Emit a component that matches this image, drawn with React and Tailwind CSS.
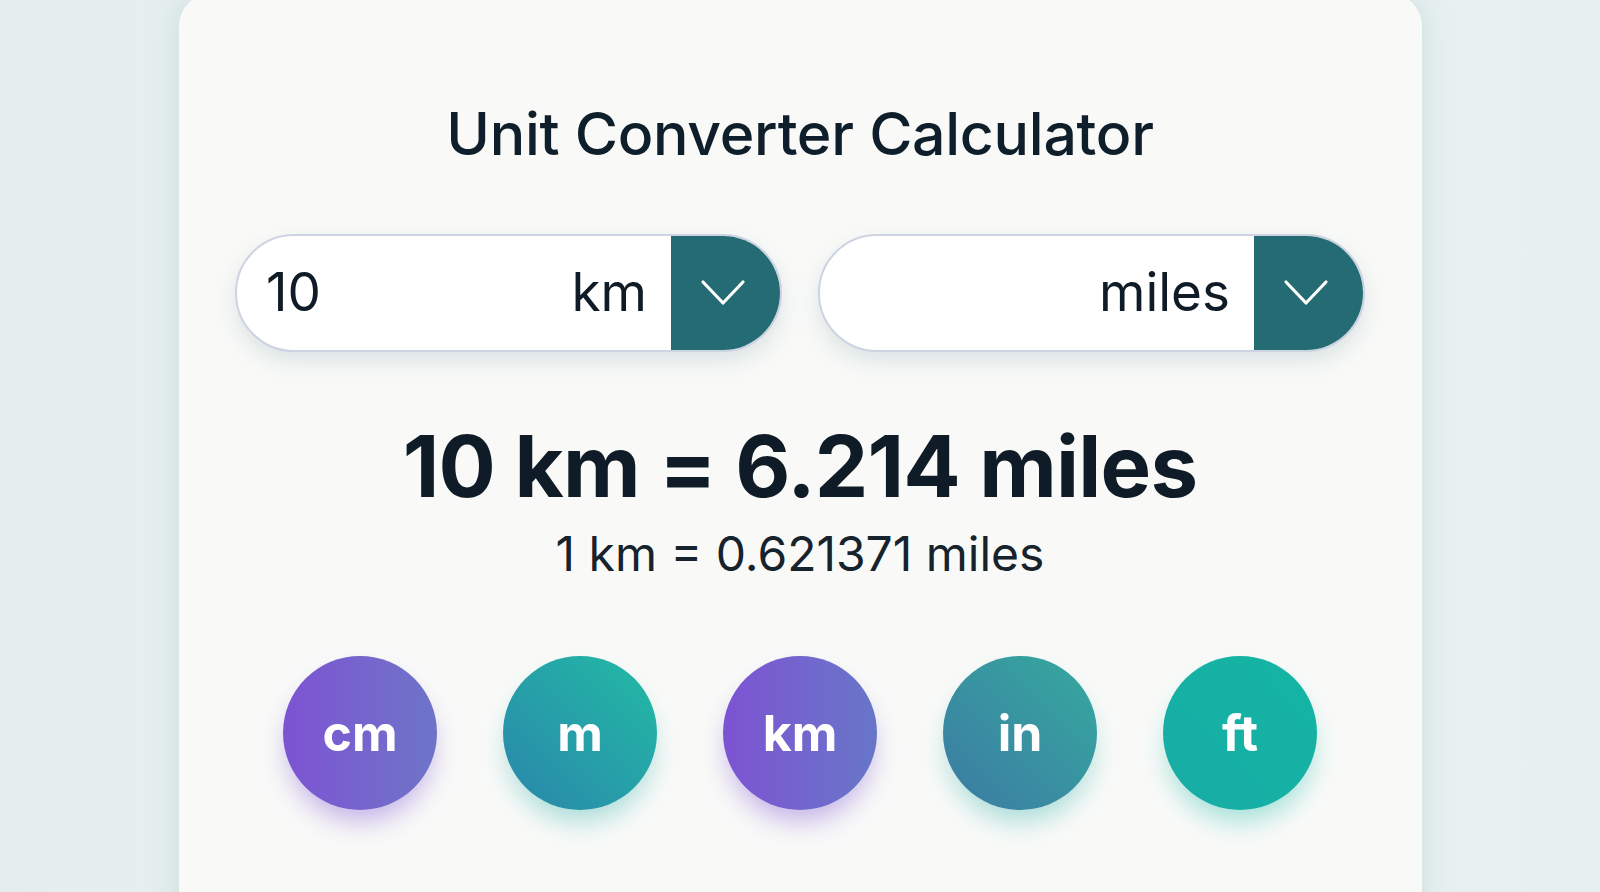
import React from 'react';

const units = [
  { label: 'cm', bg: 'bg-gradient-to-r from-[#7d52d2] to-[#6d74c8]', glow: 'shadow-[0_16px_28px_-6px_rgba(125,82,210,0.45)]' },
  { label: 'm', bg: 'bg-gradient-to-tr from-[#2a86aa] to-[#22bba4]', glow: 'shadow-[0_16px_28px_-6px_rgba(34,170,164,0.4)]' },
  { label: 'km', bg: 'bg-gradient-to-r from-[#7d52d2] to-[#6676c8]', glow: 'shadow-[0_16px_28px_-6px_rgba(125,82,210,0.45)]' },
  { label: 'in', bg: 'bg-gradient-to-tr from-[#3b7aa2] to-[#35aa9e]', glow: 'shadow-[0_16px_28px_-6px_rgba(34,170,164,0.4)]' },
  { label: 'ft', bg: 'bg-gradient-to-tr from-[#18aca6] to-[#14b5a3]', glow: 'shadow-[0_16px_28px_-6px_rgba(20,180,164,0.4)]' },
];

const Chevron = () => (
  <svg width="46" height="28" viewBox="0 0 46 28" fill="none">
    <path d="M3 3 L23 24 L43 3" stroke="white" strokeWidth="3.2" strokeLinecap="round" strokeLinejoin="round" />
  </svg>
);

const UnitField = ({ value, unit }) => (
  <div className="flex h-[118px] w-[547px] overflow-hidden rounded-full border-2 border-[#cdd3e0] bg-white shadow-[0_10px_22px_rgba(120,150,160,0.22)]">
    <div className="flex flex-1 items-center justify-between pl-[29px] pr-[24px] text-[53px] text-[#0f1b26]">
      <span>{value}</span>
      <span>{unit}</span>
    </div>
    <div className="flex w-[109px] items-center justify-center bg-[#246b74] pr-[6px]">
      <Chevron />
    </div>
  </div>
);

export default function App() {
  return (
    <div
      className="h-[892px] overflow-hidden bg-gradient-to-r from-[#e4eeee] via-[#eef4f3] to-[#e6f0f0]"
      style={{ fontFamily: 'Inter, "Noto Sans", sans-serif' }}
    >
      <div className="mx-auto mt-[-6px] flex h-[940px] w-[1243px] flex-col items-center rounded-[32px] bg-[#f9faf8] shadow-[0_0_30px_rgba(150,180,185,0.35)]">
        <h1 className="mt-[110px] text-[59px] font-medium leading-none tracking-[-0.3px] text-[#0f1e2b]">
          Unit Converter Calculator
        </h1>

        <div className="mt-[71px] flex gap-[36px]">
          <UnitField value="10" unit="km" />
          <UnitField value="" unit="miles" />
        </div>

        <div className="mt-[72px] text-[85px] font-bold leading-none tracking-[-0.8px] text-[#0f1b26]">
          10 km = 6.214 miles
        </div>
        <div className="mt-[21px] text-[48px] leading-none text-[#16222c]">
          1 km = 0.621371 miles
        </div>

        <div className="mt-[78px] flex gap-[66px]">
          {units.map((u) => (
            <div
              key={u.label}
              className={`flex h-[154px] w-[154px] items-center justify-center rounded-full ${u.bg} ${u.glow}`}
            >
              <span className="text-[50px] font-bold leading-none text-white">{u.label}</span>
            </div>
          ))}
        </div>
      </div>
    </div>
  );
}
